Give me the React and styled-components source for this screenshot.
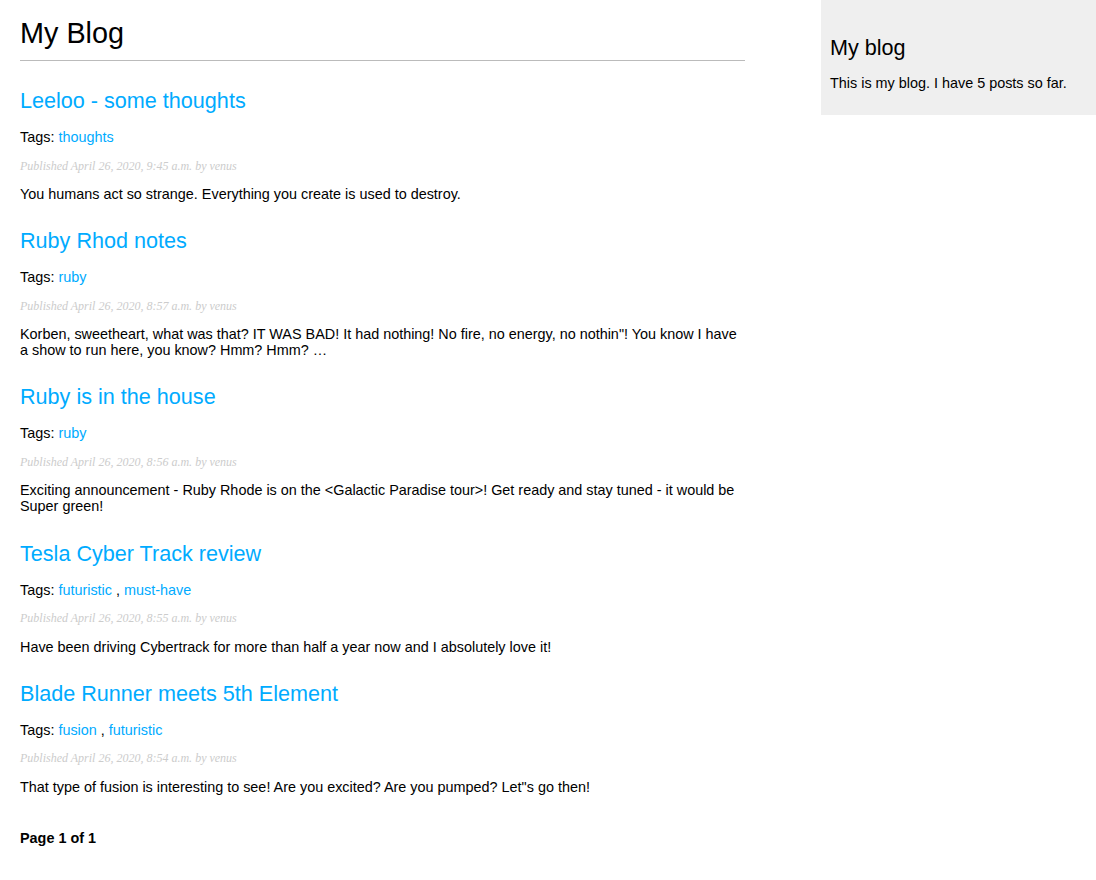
import React from "react";
import styled, { createGlobalStyle } from "styled-components";

const GlobalStyle = createGlobalStyle`
  html, body {
    margin: 0;
    padding: 0;
    background: #fff;
  }
  body {
    font-family: "Liberation Sans", Arial, Helvetica, sans-serif;
    font-size: 14.4px;
    color: #000;
  }
  * { box-sizing: border-box; }
`;

const Page = styled.div`
  display: flex;
  justify-content: space-between;
  align-items: flex-start;
  width: 1096px;
`;

const Content = styled.main`
  width: 745px;
  padding: 0 0 0 20px;
`;

const Title = styled.h1`
  font-size: 28.8px;
  font-weight: normal;
  margin: 17px 0 27px;
  padding: 0 0 10px;
  border-bottom: 1px solid #bbb;
  line-height: normal;
`;

const Post = styled.article`
  display: block;
`;

const PostTitle = styled.h2`
  font-size: 21.6px;
  font-weight: normal;
  margin: 26.2px 0 0;
  line-height: normal;
`;

const Link = styled.a`
  color: #00abff;
  text-decoration: none;
`;

const Tags = styled.p`
  margin: 15px 0 0;
`;

const DateLine = styled.p`
  margin: 13.5px 0 0;
  color: #ccc;
  font-family: Georgia, "Liberation Serif", "DejaVu Serif", serif;
  font-size: 12px;
  font-style: italic;
`;

const Body = styled.p`
  margin: 12.5px 0 0;
`;

const Pagination = styled.div`
  margin: 35px 0 40px;
  font-weight: bold;
`;

const Sidebar = styled.aside`
  width: 275px;
  padding: 10px 10px 10px 9px;
  background: #efefef;
`;

const SideTitle = styled.h2`
  font-size: 21.6px;
  font-weight: normal;
  margin: 25px 0 0;
  line-height: normal;
`;

const SideText = styled.p`
  margin: 14px 0 14px;
`;

const posts = [
  {
    title: "Leeloo - some thoughts",
    tags: ["thoughts"],
    date: "April 26, 2020, 9:45 a.m.",
    body: "You humans act so strange. Everything you create is used to destroy.",
  },
  {
    title: "Ruby Rhod notes",
    tags: ["ruby"],
    date: "April 26, 2020, 8:57 a.m.",
    body:
      "Korben, sweetheart, what was that? IT WAS BAD! It had nothing! No fire, no energy, no nothin\"! You know I have a show to run here, you know? Hmm? Hmm? …",
  },
  {
    title: "Ruby is in the house",
    tags: ["ruby"],
    date: "April 26, 2020, 8:56 a.m.",
    body:
      "Exciting announcement - Ruby Rhode is on the <Galactic Paradise tour>! Get ready and stay tuned - it would be Super green!",
  },
  {
    title: "Tesla Cyber Track review",
    tags: ["futuristic", "must-have"],
    date: "April 26, 2020, 8:55 a.m.",
    body: "Have been driving Cybertrack for more than half a year now and I absolutely love it!",
  },
  {
    title: "Blade Runner meets 5th Element",
    tags: ["fusion", "futuristic"],
    date: "April 26, 2020, 8:54 a.m.",
    body: "That type of fusion is interesting to see! Are you excited? Are you pumped? Let\"s go then!",
  },
];

export default function App() {
  return (
    <>
      <GlobalStyle />
      <Page>
        <Content>
          <Title>My Blog</Title>
          {posts.map((p) => (
            <Post key={p.title}>
              <PostTitle>
                <Link href="#">{p.title}</Link>
              </PostTitle>
              <Tags>
                Tags:{" "}
                {p.tags.map((t, i) => (
                  <React.Fragment key={t}>
                    {i > 0 && " , "}
                    <Link href="#">{t}</Link>
                  </React.Fragment>
                ))}
              </Tags>
              <DateLine>Published {p.date} by venus</DateLine>
              <Body>{p.body}</Body>
            </Post>
          ))}
          <Pagination>Page 1 of 1</Pagination>
        </Content>
        <Sidebar>
          <SideTitle>My blog</SideTitle>
          <SideText>This is my blog. I have 5 posts so far.</SideText>
        </Sidebar>
      </Page>
    </>
  );
}
